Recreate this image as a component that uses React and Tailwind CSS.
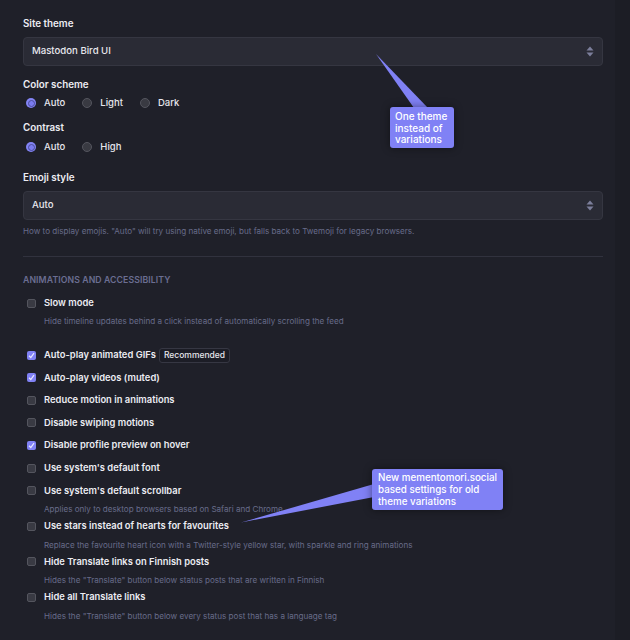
import React from 'react';

const font = { fontFamily: 'Inter, "Noto Sans", sans-serif' };

const SelectBox = ({ value }) => (
  <div className="mt-[6px] h-[29px] rounded-[4px] border border-[#353641] bg-[#2a2b35] flex items-center justify-between pl-[8px] pr-[8px]">
    <span className="text-[9.6px] font-medium text-[#e8e8ee]">{value}</span>
    <svg width="8" height="11" viewBox="0 0 8 11">
      <path d="M4 0.5 L7.5 4.5 H0.5 Z" fill="#7c7f9b" />
      <path d="M4 10.5 L7.5 6.5 H0.5 Z" fill="#7c7f9b" />
    </svg>
  </div>
);

const Radio = ({ label, checked }) => (
  <div className="flex items-center gap-[8px] mr-[14px]">
    {checked ? (
      <div className="w-[10px] h-[10px] rounded-full bg-[#8384f5] flex items-center justify-center ml-[3px]">
        <div className="w-[7px] h-[7px] rounded-full bg-[#7b7cf0] border border-[#4c4d9c]" />
      </div>
    ) : (
      <div className="w-[10px] h-[10px] rounded-full bg-[#393a42] border border-[#54555e] ml-[3px]" />
    )}
    <span className="text-[9.5px] font-medium text-[#e6e6ec]">{label}</span>
  </div>
);

const Checkbox = ({ checked }) =>
  checked ? (
    <div className="w-[9px] h-[9px] shrink-0 rounded-[2px] bg-[#8081f4] flex items-center justify-center">
      <svg width="7" height="7" viewBox="0 0 7 7">
        <path d="M1 3.8 L2.8 5.5 L6 1.2" stroke="#e8e8ff" strokeWidth="1.2" fill="none" />
      </svg>
    </div>
  ) : (
    <div className="w-[9px] h-[9px] shrink-0 rounded-[2px] bg-[#393a43] border border-[#54555e]" />
  );

const Row = ({ label, checked, badge, hint }) => (
  <div>
    <div className="h-[22.6px] flex items-center pl-[4px]">
      <Checkbox checked={checked} />
      <span className="ml-[8px] text-[9.4px] font-semibold text-[#ececf2] whitespace-nowrap">{label}</span>
      {badge && (
        <span className="ml-[3px] h-[15px] px-[4px] flex items-center rounded-[3px] border border-[#363743] bg-[#1c1d26] text-[8.5px] font-medium text-[#e6e6ec]">
          {badge}
        </span>
      )}
    </div>
    {hint && (
      <div className="mt-[2px] h-[11px] leading-[11px] pl-[21px] text-[8.1px] text-[#686c8a] whitespace-nowrap">
        {hint}
      </div>
    )}
  </div>
);

const Label = ({ children, className = '' }) => (
  <div className={`h-[14px] leading-[14px] text-[9.8px] font-semibold text-[#ececf2] ${className}`}>{children}</div>
);

export default function App() {
  return (
    <div className="relative w-[630px] h-[640px] overflow-hidden bg-[#1f2029] flex" style={font}>
      <div className="w-[615px] shrink-0 pl-[23px] pr-[12px] pt-[17px]">
        <Label>Site theme</Label>
        <SelectBox value="Mastodon Bird UI" />

        <Label className="mt-[12px]">Color scheme</Label>
        <div className="mt-[4px] h-[14px] flex items-center">
          <Radio label="Auto" checked />
          <Radio label="Light" />
          <Radio label="Dark" />
        </div>

        <Label className="mt-[11px]">Contrast</Label>
        <div className="mt-[5px] h-[14px] flex items-center">
          <Radio label="Auto" checked />
          <Radio label="High" />
        </div>

        <Label className="mt-[17px]">Emoji style</Label>
        <SelectBox value="Auto" />
        <div className="mt-[5px] h-[12px] leading-[12px] text-[8.1px] text-[#686c8a] whitespace-nowrap">
          How to display emojis. "Auto" will try using native emoji, but falls back to Twemoji for legacy browsers.
        </div>

        <div className="mt-[19px] h-px bg-[#31323e]" />

        <div className="mt-[17px] h-[12px] leading-[12px] text-[8.7px] font-semibold tracking-[0.1px] text-[#6b6e92] uppercase">
          Animations and accessibility
        </div>

        <div className="mt-[5.75px]">
          <Row label="Slow mode" hint="Hide timeline updates behind a click instead of automatically scrolling the feed" />
        </div>
        <div className="mt-[16.5px]">
          <Row label="Auto-play animated GIFs" checked badge="Recommended" />
          <Row label="Auto-play videos (muted)" checked />
          <Row label="Reduce motion in animations" />
          <Row label="Disable swiping motions" />
          <Row label="Disable profile preview on hover" checked />
          <Row label="Use system's default font" />
          <Row label="Use system's default scrollbar" hint="Applies only to desktop browsers based on Safari and Chrome" />
          <Row
            label="Use stars instead of hearts for favourites"
            hint="Replace the favourite heart icon with a Twitter-style yellow star, with sparkle and ring animations"
          />
          <Row label="Hide Translate links on Finnish posts" hint={'Hides the "Translate" button below status posts that are written in Finnish'} />
          <Row label="Hide all Translate links" hint={'Hides the "Translate" button below every status post that has a language tag'} />
        </div>
      </div>
      <div className="flex-1 bg-[#1c1d25]" />

      {/* callout pointers */}
      <svg className="absolute left-0 top-0 pointer-events-none" width="630" height="640">
        <polygon points="376,54 414,108 428,108" fill="#8081f5" />
        <polygon points="241,522.5 374,484 374,497" fill="#8081f5" />
      </svg>

      <div className="absolute left-[390px] top-[107px] w-[64px] h-[41px] rounded-[3px] bg-[#8081f5] shadow-[0_0_8px_rgba(0,0,0,0.45)] px-[5px] pt-[4px] text-[10px] leading-[11.5px] font-medium text-white whitespace-nowrap">
        One theme
        <br />
        instead of
        <br />
        variations
      </div>

      <div className="absolute left-[372px] top-[469px] w-[131px] h-[41px] rounded-[3px] bg-[#8081f5] shadow-[0_0_8px_rgba(0,0,0,0.45)] px-[6px] pt-[3px] text-[9.8px] leading-[12px] font-medium text-white whitespace-nowrap">
        New mementomori.social
        <br />
        based settings for old
        <br />
        theme variations
      </div>
    </div>
  );
}
